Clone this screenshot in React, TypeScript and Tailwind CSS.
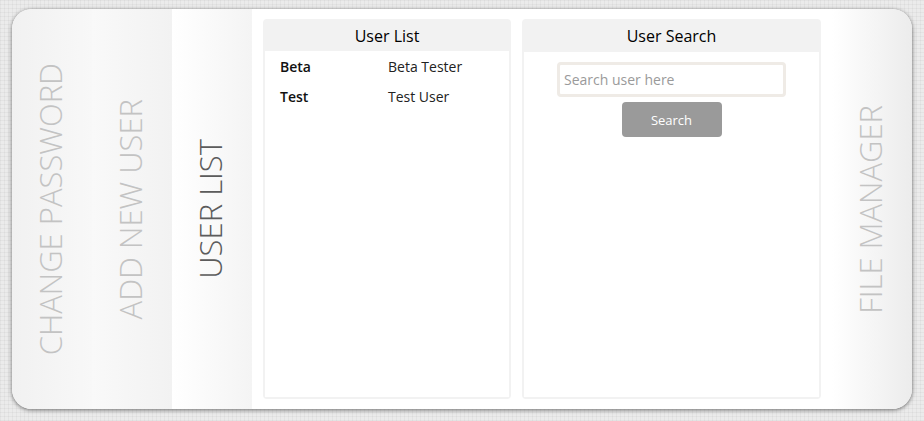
import React from "react";

const font = { fontFamily: '"Open Sans", "Noto Sans", sans-serif' };

function Tab({ label, active, cls }: { label: string; active?: boolean; cls: string }) {
  return (
    <div className={`flex items-center justify-center pr-[4px] ${cls}`}>
      <span
        className={`[writing-mode:vertical-rl] rotate-180 text-[31px] font-light leading-none whitespace-nowrap ${
          active ? "text-[#5c5c5c]" : "text-[#c3c3c3]"
        }`}
      >
        {label}
      </span>
    </div>
  );
}

export default function App() {
  return (
    <div
      style={font}
      className="w-[924px] h-[421px] bg-[#ebebeb] [background-image:repeating-linear-gradient(0deg,rgba(0,0,0,0.035)_0px,rgba(0,0,0,0.035)_1px,transparent_1px,transparent_4px),repeating-linear-gradient(90deg,rgba(0,0,0,0.035)_0px,rgba(0,0,0,0.035)_1px,transparent_1px,transparent_4px)] pt-[9px] pl-[12px]"
    >
      <div className="w-[900px] h-[400px] bg-white rounded-[20px] overflow-hidden shadow-[0_1px_4px_rgba(0,0,0,0.55)] flex">
        <Tab label="CHANGE PASSWORD" cls="w-[80px] bg-[linear-gradient(90deg,#f1f1f1,#f8f8f8)]" />
        <Tab label="ADD NEW USER" cls="w-[80px] bg-[linear-gradient(90deg,#f9f9f9,#f2f2f2)]" />
        <Tab label="USER LIST" active cls="w-[80px] bg-[linear-gradient(90deg,#ffffff,#f4f4f4)]" />
        <div className="w-[580px] bg-white flex gap-[11px] px-[11px] py-[10px]">
          <div className="w-[248px] bg-[#f2f2f2] rounded-[4px] px-[2px] pb-[2px] flex flex-col">
            <div className="h-[33px] flex items-center justify-center text-[16px] text-black">User List</div>
            <div className="flex-1 bg-white pl-[15px] text-[14px] -mt-px">
              <div className="h-[30px] flex items-center">
                <span className="w-[108px] font-semibold text-[#111]">Beta</span>
                <span className="text-[#222]">Beta Tester</span>
              </div>
              <div className="h-[30px] flex items-center">
                <span className="w-[108px] font-semibold text-[#111]">Test</span>
                <span className="text-[#222]">Test User</span>
              </div>
            </div>
          </div>
          <div className="w-[299px] bg-[#f2f2f2] rounded-[4px] px-[2px] pb-[2px] flex flex-col">
            <div className="h-[33px] flex items-center justify-center text-[16px] text-black">User Search</div>
            <div className="flex-1 bg-white flex flex-col items-center pt-[10px]">
              <input
                placeholder="Search user here"
                className="w-[229px] h-[35px] border-[3px] border-[#efebe6] rounded-[4px] px-[4px] text-[14px] text-[#333] placeholder:text-[#9a9a9a] outline-none"
                style={font}
              />
              <button className="mt-[5px] w-[100px] h-[35px] bg-[#9a9a9a] rounded-[4px] text-white text-[13px] pt-[2px]" style={font}>
                Search
              </button>
            </div>
          </div>
        </div>
        <Tab label="FILE MANAGER" cls="flex-1 bg-[linear-gradient(90deg,#ffffff,#ececec)]" />
      </div>
    </div>
  );
}
